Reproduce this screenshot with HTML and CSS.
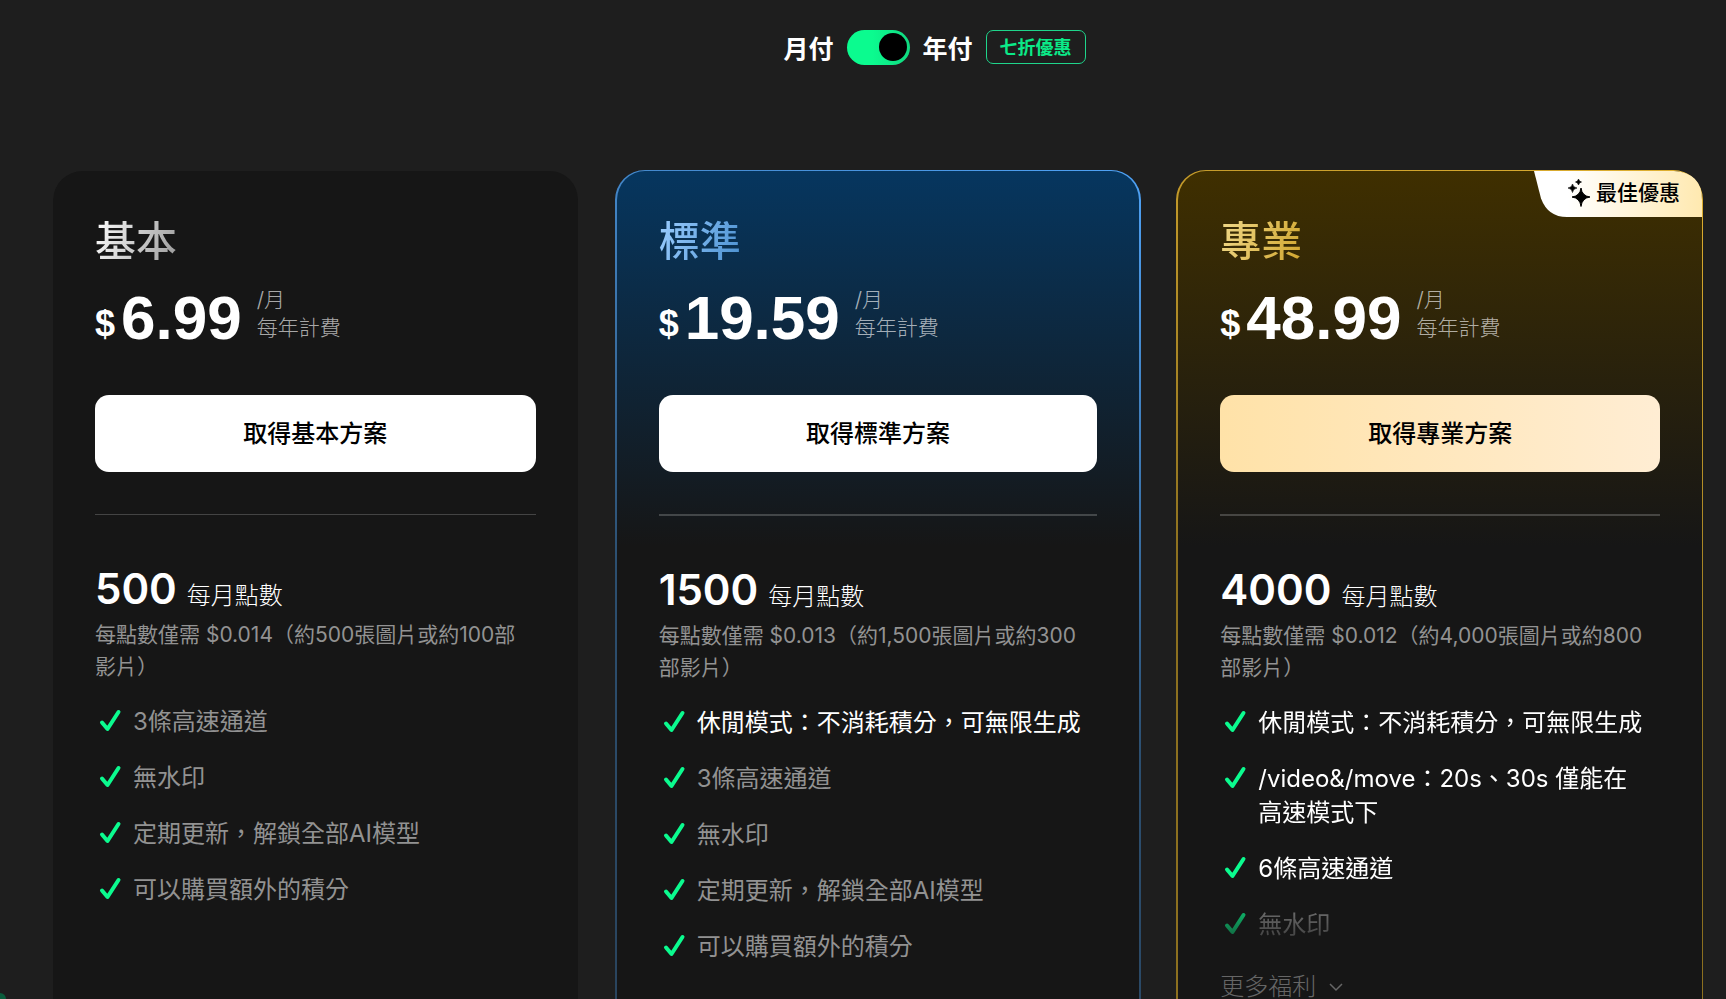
FILE: index.html
```
<!DOCTYPE html>
<html lang="zh-Hant">
  <head>
    <meta charset="utf-8">
    <link rel="stylesheet" href="styles.css">
    <title>訂閱方案</title>
  </head>
  <body>
    <svg class="symbols" width="0" height="0" aria-hidden="true">
      <symbol id="check" viewBox="0 0 30 30">
        <path d="M7 16.5 L12.500 23 L23.500 6" fill="none" stroke="#0bfb8f" stroke-width="4" stroke-linecap="round" stroke-linejoin="round"/>
      </symbol>
    </svg>

    <div class="billing">
      <div class="billing-switch">
        <span>月付</span>
        <input type="checkbox" id="yearly" class="toggle" aria-label="年付" checked>
        <label for="yearly">年付</label>
      </div>
      <span class="discount">七折優惠</span>
    </div>

    <div class="plans">
      <div class="card basic">
        <h2 class="plan-name">基本</h2>
        <div class="price">
          <span class="currency">$</span>
          <span class="amount">6.99</span>
          <span class="period">/月<br>每年計費</span>
        </div>
        <button class="buy-button">取得基本方案</button>
        <hr>
        <div class="credits"><b>500</b> <span>每月點數</span></div>
        <p class="credits-note">每點數僅需 $0.014（約500張圖片或約100部影片）</p>
        <ul class="features">
          <li><svg><use href="#check"/></svg>3條高速通道</li>
          <li><svg><use href="#check"/></svg>無水印</li>
          <li><svg><use href="#check"/></svg>定期更新，解鎖全部AI模型</li>
          <li><svg><use href="#check"/></svg>可以購買額外的積分</li>
        </ul>
      </div>

      <div class="card standard">
        <h2 class="plan-name">標準</h2>
        <div class="price">
          <span class="currency">$</span>
          <span class="amount">19.59</span>
          <span class="period">/月<br>每年計費</span>
        </div>
        <button class="buy-button">取得標準方案</button>
        <hr>
        <div class="credits"><b>1500</b> <span>每月點數</span></div>
        <p class="credits-note">每點數僅需 $0.013（約1,500張圖片或約300部影片）</p>
        <ul class="features">
          <li class="highlight"><svg><use href="#check"/></svg>休閒模式：不消耗積分，可無限生成</li>
          <li><svg><use href="#check"/></svg>3條高速通道</li>
          <li><svg><use href="#check"/></svg>無水印</li>
          <li><svg><use href="#check"/></svg>定期更新，解鎖全部AI模型</li>
          <li><svg><use href="#check"/></svg>可以購買額外的積分</li>
        </ul>
      </div>

      <div class="card pro">
        <div class="best-offer">
          <svg class="best-offer-shape" viewBox="0 0 168 47" preserveAspectRatio="none">
            <defs>
              <linearGradient id="cream" x1="0" y1="0" x2="1" y2="0">
                <stop offset="0.2" stop-color="#ffffff"/>
                <stop offset="1" stop-color="#ffe9b0"/>
              </linearGradient>
            </defs>
            <path d="M0 0 H140 Q168 2 168 29 V47 H33 Q14 47 7 28 Z" fill="url(#cream)"/>
          </svg>
          <svg class="sparkles" viewBox="0 0 24 28">
            <path d="M13 9 Q14 17 22 18 Q14 19 13 27.500 Q12 19 4 18 Q12 17 13 9Z" fill="#000" stroke="#000" stroke-linejoin="round"/>
            <path d="M4.500 5 Q5 8.500 9 9 Q5 9.500 4.500 13.500 Q4 9.500 0 9 Q4 8.500 4.500 5Z M10.500 0 Q11 2.500 13.500 3 Q11 3.500 10.500 6 Q10 3.500 7.500 3 Q10 2.500 10.500 0Z" fill="#000" stroke="#000" stroke-width="0.6" stroke-linejoin="round"/>
          </svg>
          <span>最佳優惠</span>
        </div>
        <h2 class="plan-name">專業</h2>
        <div class="price">
          <span class="currency">$</span>
          <span class="amount">48.99</span>
          <span class="period">/月<br>每年計費</span>
        </div>
        <button class="buy-button">取得專業方案</button>
        <hr>
        <div class="credits"><b>4000</b> <span>每月點數</span></div>
        <p class="credits-note">每點數僅需 $0.012（約4,000張圖片或約800部影片）</p>
        <ul class="features fade">
          <li class="highlight"><svg><use href="#check"/></svg>休閒模式：不消耗積分，可無限生成</li>
          <li class="highlight"><svg><use href="#check"/></svg>/video&amp;/move：20s、30s 僅能在高速模式下</li>
          <li class="highlight"><svg><use href="#check"/></svg>6條高速通道</li>
          <li><svg><use href="#check"/></svg>無水印</li>
        </ul>
        <button class="more-button">更多福利
          <svg width="16" height="10" viewBox="0 0 16 10"><path d="M2 2 L8 8 L14 2" fill="none" stroke="currentColor" stroke-width="1.5"/></svg>
        </button>
      </div>
    </div>
    <div class="corner-dot"></div>
  </body>
</html>
```
FILE: styles.css
```
* {
  box-sizing: border-box;
}

body {
  margin: 0;
  padding: 24px 23px 40px 53px;
  font-family: Inter, "Noto Sans CJK TC", sans-serif;
  background-color: #1e1e1e;
  color: white;
}

button {
  border: none;
  font-family: inherit;
  cursor: pointer;
}

.symbols {
  position: absolute;
}

.billing {
  display: grid;
  grid-template-columns: 1fr auto 1fr;
  align-items: center;
  column-gap: 13px;
  height: 46px;
}

.billing-switch {
  grid-column: 2;
  display: flex;
  align-items: center;
  gap: 13px;
  font-size: 25px;
  font-weight: bold;
}

.toggle {
  appearance: none;
  width: 63px;
  height: 35px;
  margin: 0;
  padding: 3px;
  border-radius: 18px;
  background: linear-gradient(90deg, #0bfb8f 40%, #10d980);
  cursor: pointer;
}

.toggle::before {
  content: "";
  display: block;
  width: 28px;
  height: 28px;
  border-radius: 50%;
  background-color: black;
}

.toggle:checked::before {
  margin-left: auto;
}

.discount {
  justify-self: start;
  width: 100px;
  padding-top: 2px;
  border: 1px solid #1fd58b;
  border-radius: 7px;
  line-height: 30px;
  text-align: center;
  font-size: 18px;
  font-weight: bold;
  color: #0bea88;
}

.plans {
  display: grid;
  grid-template-columns: 1fr 1fr 1fr;
  gap: 35px;
  margin-top: 100px;
}

.card {
  position: relative;
  min-height: 860px;
  padding: 46px 42px 40px;
  border: solid transparent;
  border-width: 1px 2px;
  border-radius: 30px;
}

.basic {
  border-width: 1px 2px 1px 0;
  background: #161616 padding-box;
}

.standard {
  background: linear-gradient(#06365f, #161616 375px) padding-box,
    linear-gradient(200deg, #4fa3f7, #2c4f70 55%, #29435c) border-box;
}

.pro {
  border-right-width: 1px;
  background: linear-gradient(#3f2f00, #161616 375px) padding-box,
    linear-gradient(200deg, #e0b030, #8c701f 55%, #8c701f) border-box;
}

.plan-name {
  width: fit-content;
  margin: 0;
  font-size: 41px;
  line-height: 48px;
  font-weight: 500;
  color: transparent;
  background-clip: text;
}

.basic .plan-name {
  background-image: linear-gradient(110deg, #ffffff, #999999);
}

.standard .plan-name {
  background-image: linear-gradient(110deg, #9bcdff, #4a90d0);
}

.pro .plan-name {
  background-image: linear-gradient(110deg, #f0d98a, #d0a52c);
}

.price {
  display: flex;
  align-items: flex-end;
  height: 77px;
  font-family: "Liberation Sans", sans-serif;
  font-weight: bold;
}

.currency {
  width: 26px;
  font-size: 36px;
  line-height: 36px;
}

.amount {
  font-size: 62px;
  line-height: 48px;
}

.period {
  margin-left: 15px;
  font-family: Inter, "Noto Sans CJK TC", sans-serif;
  font-size: 21px;
  line-height: 28px;
  font-weight: 300;
  color: rgba(255, 255, 255, 0.65);
}

.buy-button {
  display: block;
  width: 100%;
  height: 77px;
  margin-top: 53px;
  padding: 0 0 4px;
  border-radius: 14px;
  background-color: white;
  font-size: 24px;
  font-weight: 500;
  color: black;
}

.pro .buy-button {
  background: linear-gradient(90deg, #ffe2a8, #ffedd3);
}

hr {
  height: 1px;
  margin: 42px 0 48px;
  border: none;
  background-color: rgba(255, 255, 255, 0.2);
}

.standard hr,
.pro hr {
  height: 2px;
}

.credits {
  display: flex;
  align-items: baseline;
  gap: 10px;
  height: 56px;
  line-height: 51px;
}

.credits b {
  font-size: 42px;
  font-weight: 600;
}

.credits span {
  font-size: 24px;
  font-weight: 300;
}

.credits-note {
  margin: 0;
  padding-right: 10px;
  font-size: 21px;
  line-height: 32px;
  color: #929292;
}

.features {
  margin: 22px 0 0;
  padding: 0;
  list-style: none;
  font-size: 24px;
  line-height: 34px;
  color: #929292;
}

.features li {
  position: relative;
  margin-bottom: 22px;
  padding: 0 12px 0 38px;
}

.features svg {
  position: absolute;
  left: 0;
  top: 1px;
  width: 30px;
  height: 30px;
}

.features .highlight {
  color: white;
}

.fade {
  mask-image: linear-gradient(black calc(100% - 56px), transparent calc(100% + 24px));
}

.more-button {
  display: flex;
  align-items: center;
  gap: 12px;
  margin-top: 28px;
  padding: 0;
  background: none;
  font-size: 24px;
  line-height: 34px;
  font-weight: 300;
  color: #666666;
}

.fade li:last-child {
  margin-bottom: 10px;
}

/* ribbon lying over the top right corner of the card */
.best-offer {
  position: absolute;
  top: 0;
  right: 0;
  display: flex;
  align-items: center;
  justify-content: flex-end;
  gap: 4px;
  width: 168px;
  height: 46px;
  padding: 0 22px 2px 0;
  font-size: 21px;
  font-weight: 500;
  line-height: 30px;
  color: black;
}

.best-offer-shape {
  position: absolute;
  inset: 0;
  width: 100%;
  height: 100%;
}

.sparkles {
  position: relative;
  width: 24px;
  height: 28px;
}

.best-offer span {
  position: relative;
}

.corner-dot {
  position: fixed;
  left: -6px;
  bottom: -6px;
  width: 12px;
  height: 12px;
  border-radius: 50%;
  background-color: #0a5c3c;
}
```
